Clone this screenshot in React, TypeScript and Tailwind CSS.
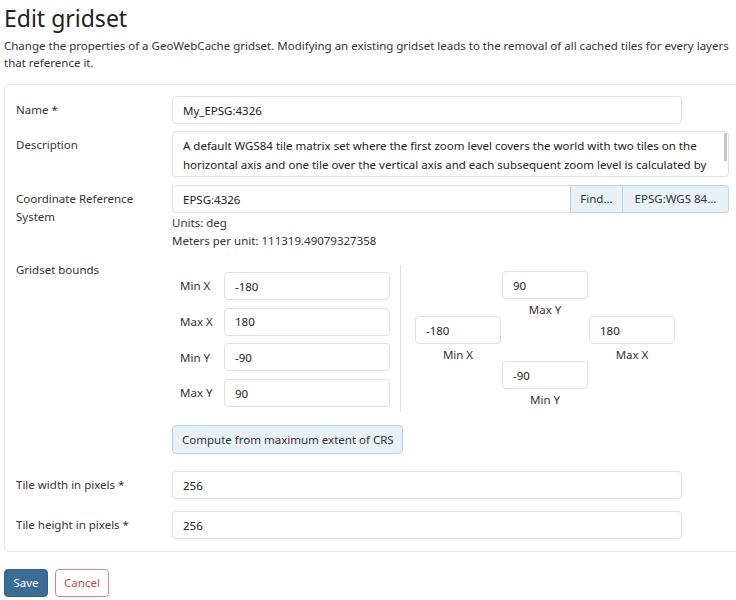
import React from "react";

const font = { fontFamily: '"Noto Sans", "Liberation Sans", sans-serif' };

const inputCls =
  "h-[28px] rounded-[4px] border border-[#e0e0e0] bg-white px-[10px] text-[11.5px] text-[#222] outline-none";

function BoundInput({ value, label }: { value: string; label: string }) {
  return (
    <div className="flex flex-col">
      <input readOnly value={value} className={`${inputCls} w-[86px]`} />
      <div className="h-[17px] text-center leading-[21px]">{label}</div>
    </div>
  );
}

export default function App() {
  return (
    <div style={font} className="w-[736px] h-[600px] overflow-hidden bg-white px-[4px] text-[11.5px] text-[#333]">
      <h1 className="pt-[3px] text-[23px] leading-[30px] text-[#222]">Edit gridset</h1>
      <p className="mt-[4px] leading-[17px] whitespace-nowrap">
        Change the properties of a GeoWebCache gridset. Modifying an existing gridset leads to the removal of all cached tiles for every layers
        <br />
        that reference it.
      </p>

      <div className="mt-[13px] w-[760px] rounded-[4px] border border-[#e6e6e6] pl-[11px] pt-[11px] pb-[12px]">
        {/* Name */}
        <div className="flex">
          <label className="w-[156px] shrink-0 pt-[5px] leading-[18px]">Name *</label>
          <input readOnly value="My_EPSG:4326" className={`${inputCls} w-[510px]`} />
        </div>

        {/* Description */}
        <div className="mt-[7px] flex">
          <label className="w-[156px] shrink-0 pt-[5px] leading-[18px]">Description</label>
          <div className="relative h-[46px] w-[557px] overflow-hidden rounded-[4px] border border-[#e0e0e0] bg-white pl-[10px] pt-[4px] leading-[19px] text-[#222] whitespace-nowrap">
            <div>A default WGS84 tile matrix set where the first zoom level covers the world with two tiles on the</div>
            <div>horizontal axis and one tile over the vertical axis and each subsequent zoom level is calculated by</div>
            <div>half the resolution of its previous one.</div>
            <div className="absolute right-[1px] top-[1px] h-[28px] w-[3px] bg-[#c4c4c4]" />
          </div>
        </div>

        {/* CRS */}
        <div className="mt-[8px] flex">
          <label className="w-[156px] shrink-0 pt-[5px] leading-[18px]">
            Coordinate Reference
            <br />
            System
          </label>
          <div className="flex flex-col">
            <div className="flex w-[557px]">
              <input
                readOnly
                value="EPSG:4326"
                className={`${inputCls} w-[398px] rounded-r-none border-r-0`}
              />
              <button className="h-[28px] w-[53px] border border-[#bcd3e4] bg-[#e8f1f8] text-[11.5px] text-[#333]">
                Find...
              </button>
              <button className="h-[28px] w-[106px] rounded-r-[4px] border border-l-0 border-[#bcd3e4] bg-[#e8f1f8] text-[11.5px] text-[#333]">
                EPSG:WGS 84...
              </button>
            </div>
            <div className="mt-[1px] leading-[18px]">Units: deg</div>
            <div className="leading-[18px]">Meters per unit: 111319.49079327358</div>
          </div>
        </div>

        {/* Gridset bounds */}
        <div className="mt-[6px] flex">
          <label className="w-[156px] shrink-0 pt-[5px] leading-[18px]">Gridset bounds</label>
          <div className="flex flex-col pt-[9px]">
            <div className="flex">
              <div className="flex w-[228px] flex-col gap-[7.7px] pl-[8px] pt-[7px] pb-[5px]">
                {[
                  ["Min X", "-180"],
                  ["Max X", "180"],
                  ["Min Y", "-90"],
                  ["Max Y", "90"],
                ].map(([label, value]) => (
                  <div key={label} className="flex items-center">
                    <span className="w-[44px]">{label}</span>
                    <input readOnly value={value} className={`${inputCls} w-[166px]`} />
                  </div>
                ))}
              </div>
              <div className="border-l border-[#e0e0e0] pl-[14px] pt-[6px]">
                <div className="grid grid-cols-[86px_86px_86px] gap-x-[1px]">
                  <div />
                  <BoundInput value="90" label="Max Y" />
                  <div />
                  <BoundInput value="-180" label="Min X" />
                  <div />
                  <BoundInput value="180" label="Max X" />
                  <div />
                  <BoundInput value="-90" label="Min Y" />
                  <div />
                </div>
              </div>
            </div>
            <button className="mt-[13px] h-[29px] w-[231px] whitespace-nowrap rounded-[4px] border border-[#b9d1e3] bg-[#e8f1f8] pl-[9px] text-left text-[11.5px] text-[#333]">
              Compute from maximum extent of CRS
            </button>
          </div>
        </div>

        {/* Tile size */}
        <div className="mt-[17px] flex">
          <label className="w-[156px] shrink-0 pt-[5px] leading-[18px]">Tile width in pixels *</label>
          <input readOnly value="256" className={`${inputCls} w-[510px]`} />
        </div>
        <div className="mt-[12px] flex">
          <label className="w-[156px] shrink-0 pt-[5px] leading-[18px]">Tile height in pixels *</label>
          <input readOnly value="256" className={`${inputCls} w-[510px]`} />
        </div>
      </div>

      <div className="mt-[17px] flex gap-[7px]">
        <button className="h-[28px] w-[44px] rounded-[4px] border border-[#33618a] bg-[#3b6c96] text-[11.5px] text-white">
          Save
        </button>
        <button className="h-[28px] w-[54px] rounded-[4px] border border-[#dc8587] bg-white text-[11.5px] text-[#c9474a]">
          Cancel
        </button>
      </div>
    </div>
  );
}
